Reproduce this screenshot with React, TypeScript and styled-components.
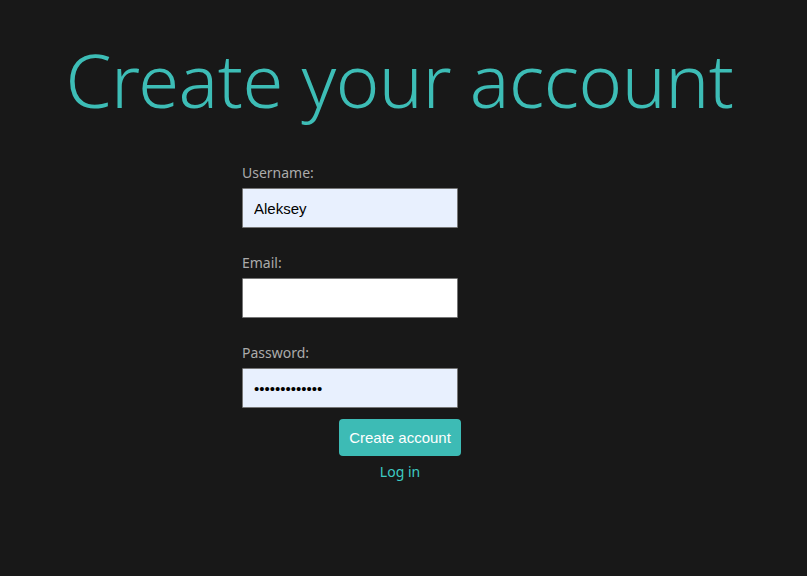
import React from "react";
import styled, { createGlobalStyle } from "styled-components";

const Global = createGlobalStyle`
  html, body { margin: 0; padding: 0; background: #181818; }
  body { font-family: "Noto Sans", "Open Sans", sans-serif; }
`;

const Page = styled.main`
  min-height: 576px;
  background: #181818;
  display: flex;
  flex-direction: column;
  align-items: center;
`;

const Title = styled.h1`
  margin: 28px 8px 0 0;
  font-family: "Noto Sans", "Open Sans", sans-serif;
  font-weight: 300;
  font-size: 74px;
  line-height: 104px;
  color: #3dbdb6;
  letter-spacing: -0.5px;
`;

const Form = styled.form`
  width: 316px;
  padding-right: 7px;
  margin-top: 31px;
  display: flex;
  flex-direction: column;
`;

const Fields = styled.div`
  display: flex;
  flex-direction: column;
  gap: 25px;
`;

const Field = styled.div`
  display: flex;
  flex-direction: column;
  gap: 6px;
`;

const Label = styled.label`
  font-family: "Noto Sans", "Open Sans", sans-serif;
  font-size: 14px;
  line-height: 19px;
  color: #ababab;
`;

const Input = styled.input<{ $autofill?: boolean }>`
  box-sizing: border-box;
  width: 216px;
  height: 40px;
  margin: 0;
  padding: 0 11px;
  border: 1px solid #767676;
  border-radius: 1px;
  background: ${(p) => (p.$autofill ? "#e8f0fe" : "#ffffff")};
  color: #000;
  font-family: "Liberation Sans", Arial, sans-serif;
  font-size: 15px;
  outline: none;
`;

const Actions = styled.div`
  display: flex;
  flex-direction: column;
  align-items: center;
  margin-top: 11px;
`;

const Button = styled.button`
  height: 37px;
  padding: 0 10px;
  border: none;
  border-radius: 4px;
  background: #3dbbb5;
  color: #ffffff;
  font-family: "Liberation Sans", Arial, sans-serif;
  font-size: 15px;
  cursor: pointer;
`;

const LinkText = styled.a`
  margin-top: 6px;
  font-family: "Noto Sans", "Open Sans", sans-serif;
  font-size: 14px;
  line-height: 20px;
  color: #3dcbc3;
  text-decoration: none;
`;

export default function App() {
  return (
    <>
      <Global />
      <Page>
        <Title>Create your account</Title>
        <Form onSubmit={(e) => e.preventDefault()}>
          <Fields>
            <Field>
              <Label htmlFor="username">Username:</Label>
              <Input id="username" $autofill defaultValue="Aleksey" />
            </Field>
            <Field>
              <Label htmlFor="email">Email:</Label>
              <Input id="email" type="email" />
            </Field>
            <Field>
              <Label htmlFor="password">Password:</Label>
              <Input id="password" type="password" $autofill defaultValue="aleksey123456" />
            </Field>
          </Fields>
          <Actions>
            <Button type="submit">Create account</Button>
            <LinkText href="#">Log in</LinkText>
          </Actions>
        </Form>
      </Page>
    </>
  );
}
